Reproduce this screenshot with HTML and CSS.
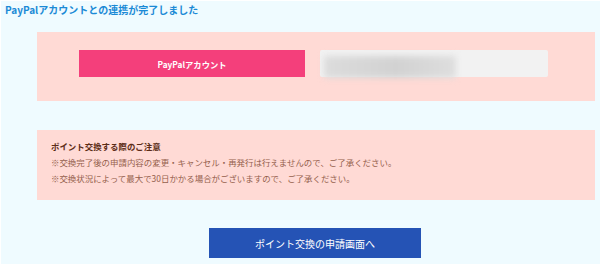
FILE: index.html
```html
<!DOCTYPE html>
<html lang="ja">
<head>
  <meta charset="UTF-8">
  <meta name="viewport" content="width=device-width, initial-scale=1.0">
  <title>PayPal連携完了</title>
  <link rel="stylesheet" href="styles.css">
</head>
<body>
  <div class="page">
    <h1 class="page-title">PayPalアカウントとの連携が完了しました</h1>

    <div class="content">
      <div class="account-box">
        <div class="account-label">PayPalアカウント</div>
        <div class="account-value">
          <span class="masked"></span>
        </div>
      </div>

      <div class="notice">
        <p class="notice-title">ポイント交換する際のご注意</p>
        <p>※交換完了後の申請内容の変更・キャンセル・再発行は行えませんので、ご了承ください。</p>
        <p>※交換状況によって最大で30日かかる場合がございますので、ご了承ください。</p>
      </div>

      <div class="actions">
        <a class="btn-next" href="#">ポイント交換の申請画面へ</a>
      </div>
    </div>
  </div>
</body>
</html>
```

FILE: styles.css
```css
body {
  margin: 0;
  background-color: #ffffff;
  font-family: "Noto Sans CJK JP", "Noto Sans", sans-serif;
}
.page {
  margin: 1px 0 0 1px;
  min-height: 263px;
  background-color: #effbff;
  overflow: hidden;
}
.page-title {
  margin: 0;
  padding: 2px 4px 0;
  font-size: 10px;
  line-height: 14px;
  font-weight: bold;
  color: #1b8ad6;
}
.content {
  width: 558px;
  margin: 15px 0 0 36px;
}
.account-box {
  display: flex;
  gap: 15px;
  padding: 18px 0 24px 42px;
  background-color: #ffdad5;
}
.account-label {
  width: 226px;
  height: 27px;
  display: flex;
  align-items: center;
  justify-content: center;
  background-color: #f43f7b;
  color: #ffffff;
  font-size: 8.3px;
  font-weight: bold;
}
.account-value {
  position: relative;
  width: 228px;
  height: 27px;
  background-color: #f2f2f2;
  border-radius: 2px;
}
.masked {
  position: absolute;
  left: 4px;
  top: 6px;
  width: 132px;
  height: 22px;
  background: linear-gradient(90deg, #dcdcdc, #d2d2d2 55%, #dedede);
  filter: blur(3px);
}
.notice {
  margin-top: 29px;
  padding: 8px 14px 14px;
  background-color: #ffdad5;
  font-size: 8.45px;
  line-height: 16px;
  color: #94604c;
}
.notice p {
  margin: 0;
}
.notice .notice-title {
  font-weight: bold;
  color: #5b2c16;
}
.actions {
  display: flex;
  justify-content: center;
  padding: 28px 2px 0 0;
}
.btn-next {
  display: flex;
  align-items: center;
  justify-content: center;
  width: 212px;
  height: 30px;
  background-color: #2553b5;
  color: #ffffff;
  font-size: 10px;
  text-decoration: none;
}
```
